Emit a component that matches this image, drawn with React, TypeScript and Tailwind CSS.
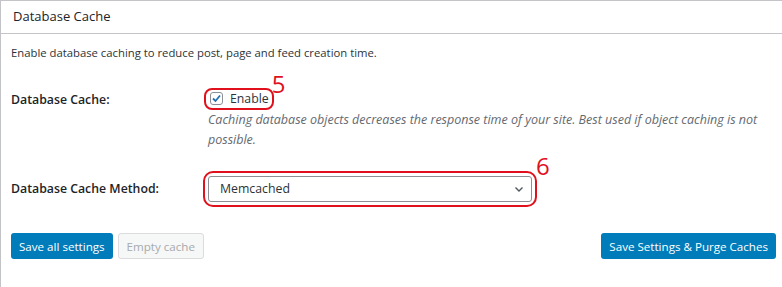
import React from "react";

export default function App() {
  const font = { fontFamily: '"Open Sans", "Noto Sans", sans-serif' };
  return (
    <div className="w-[782px] h-[287px] bg-white overflow-hidden" style={font}>
      <div className="border-l border-t border-[#c3c4c7] h-full">
        <div className="h-[33px] border-b border-[#c3c4c7] flex items-center pl-[12px] text-[13px] text-[#1d2327]">
          Database Cache
        </div>
        <div className="pl-[10px] pt-[11px] text-[11.3px] text-[#2c3338]">
          Enable database caching to reduce post, page and feed creation time.
        </div>
        <div className="flex pl-[10px] mt-[19px]">
          <div className="w-[197px] text-[12.3px] font-semibold text-[#1d2327] pt-[10px]">Database Cache:</div>
          <div className="flex-1">
            <div className="relative inline-flex items-center h-[22px] ml-[-4px] mt-[7px] pl-[4px] pr-[3px] border-2 border-[#e0101d] rounded-[8px]">
              <span className="w-[13px] h-[13px] border border-[#8c8f94] rounded-[3px] bg-white flex items-center justify-center">
                <svg width="11" height="11" viewBox="0 0 11 11">
                  <path d="M2 5.5 L4.5 8 L9 2.5" stroke="#2271b1" strokeWidth="1.8" fill="none" />
                </svg>
              </span>
              <span className="ml-[7px] text-[12.3px] text-[#2c3338]">Enable</span>
              <span className="absolute left-[100%] top-[-18px] ml-[0px] text-[24px] leading-none text-[#e0101d]">5</span>
            </div>
            <div className="text-[12.5px] italic text-[#646970] leading-[20px] mt-[0px] pr-[20px]">
              Caching database objects decreases the response time of your site. Best used if object caching is not possible.
            </div>
          </div>
        </div>
        <div className="flex pl-[10px] mt-[21px] items-center">
          <div className="w-[192px] text-[12.3px] font-semibold text-[#1d2327]">Database Cache Method:</div>
          <div className="relative border-2 border-[#e0101d] rounded-[10px] p-[3px]">
            <div className="w-[324px] h-[26px] border border-[#8c8f94] rounded-[3px] flex items-center justify-between pl-[11px] pr-[6px] text-[12.3px] text-[#2c3338]">
              <span>Memcached</span>
              <svg width="12" height="12" viewBox="0 0 12 12">
                <path d="M2.5 4.5 L6 8 L9.5 4.5" stroke="#50575e" strokeWidth="1.4" fill="none" />
              </svg>
            </div>
            <span className="absolute left-[100%] top-[-19px] ml-[1px] text-[24px] leading-none text-[#e0101d]">6</span>
          </div>
        </div>
        <div className="flex pl-[10px] pr-[6px] mt-[26px] items-center">
          <button className="h-[26px] px-[8px] rounded-[3px] bg-[#007cba] text-white text-[11.6px]">Save all settings</button>
          <button className="h-[26px] ml-[5px] px-[8px] rounded-[3px] bg-[#f6f7f7] border border-[#dcdcde] text-[#a7aaad] text-[11.6px]">Empty cache</button>
          <div className="flex-1" />
          <button className="h-[26px] px-[8px] rounded-[3px] bg-[#007cba] text-white text-[11.6px]">Save Settings &amp; Purge Caches</button>
        </div>
      </div>
    </div>
  );
}
